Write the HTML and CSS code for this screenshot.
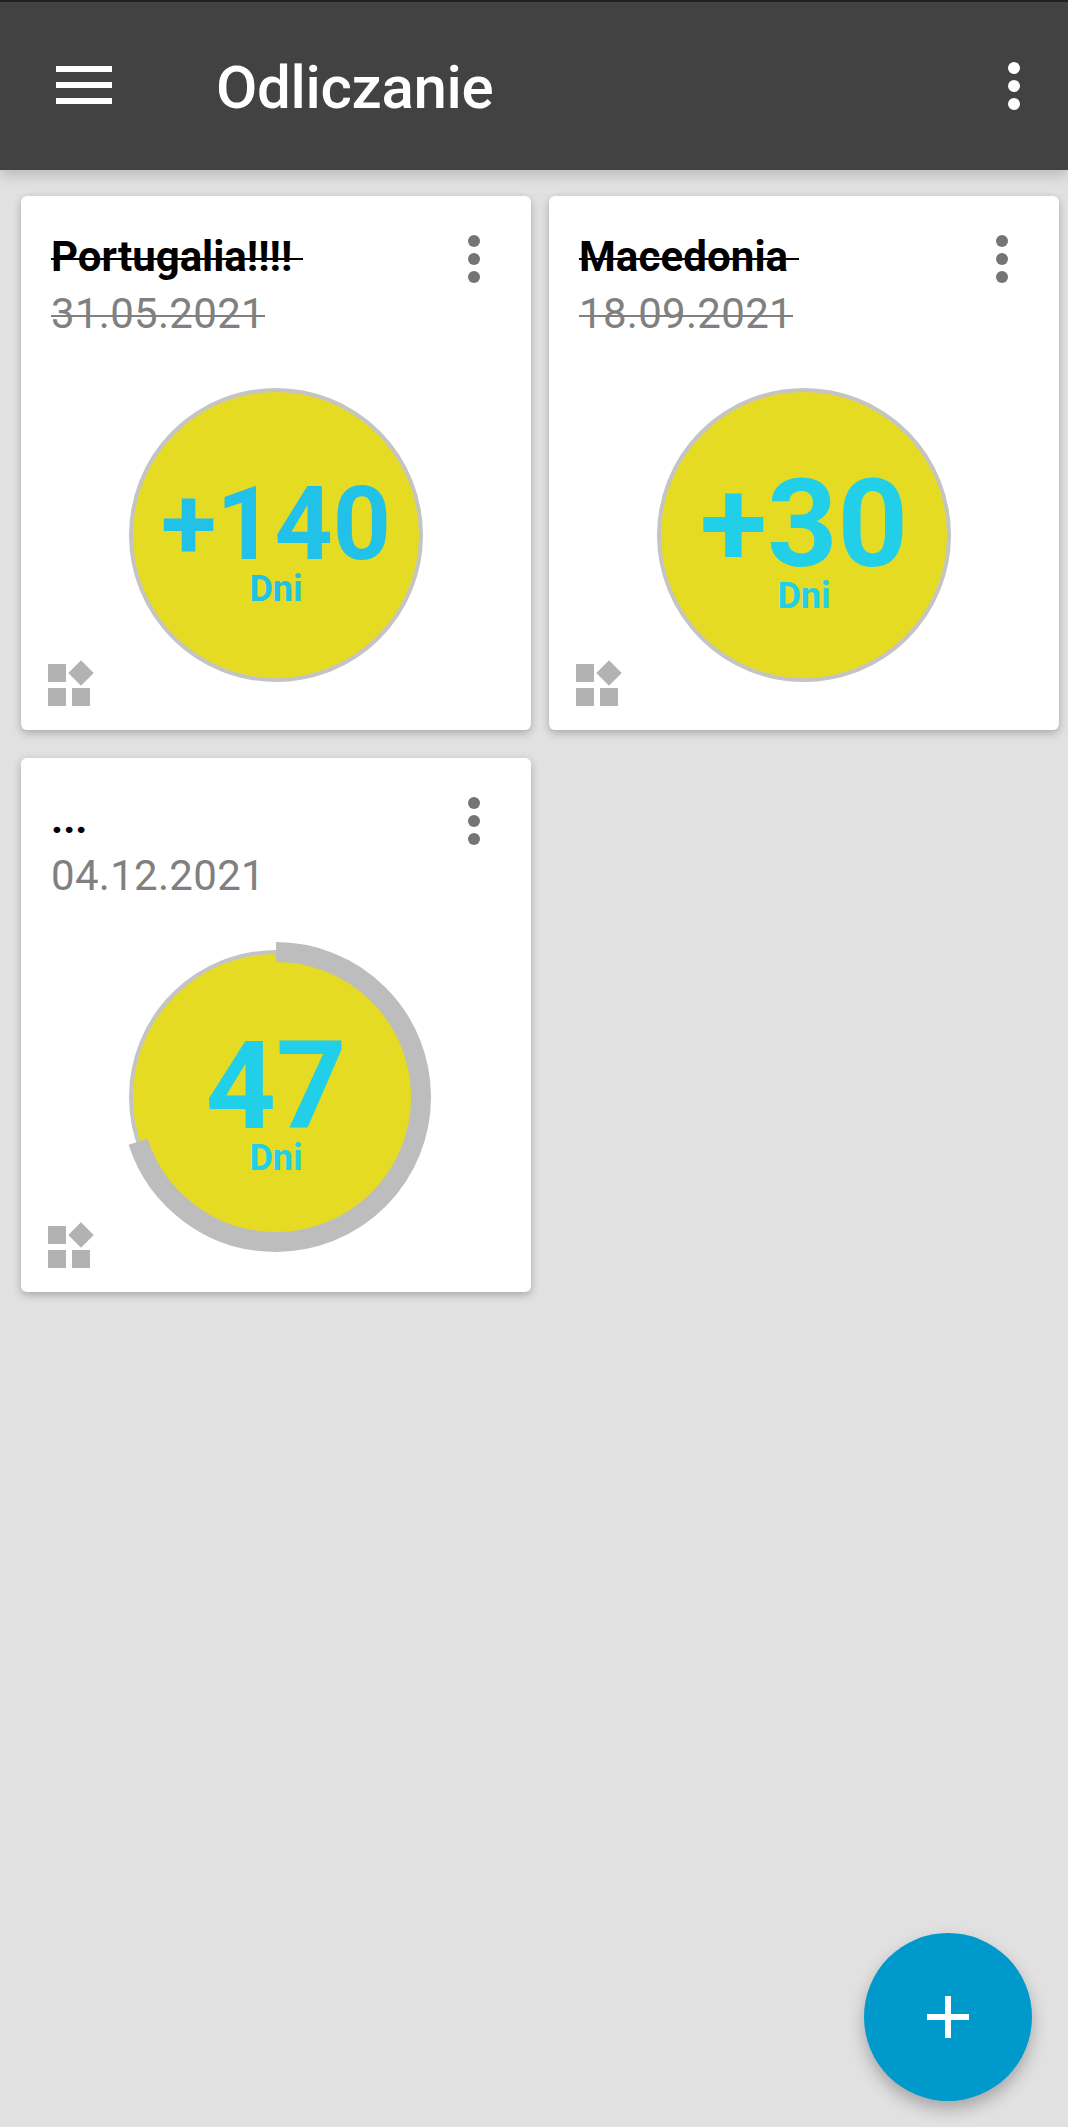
FILE: index.html
```html
<!DOCTYPE html>
<html lang="pl">
<head>
    <meta charset="UTF-8">
    <title>Odliczanie</title>
    <link rel="stylesheet" href="styles.css">
</head>
<body>
    <header class="toolbar">
        <svg class="hamburger" width="56" height="38" viewBox="0 0 56 38">
            <path d="M0 0h56v6H0zM0 16h56v6H0zM0 32h56v6H0z"/>
        </svg>
        <h1 class="toolbar-title">Odliczanie</h1>
        <svg class="dots" width="12" height="48" viewBox="0 0 12 48">
            <circle cx="6" cy="6" r="6"/><circle cx="6" cy="24" r="6"/><circle cx="6" cy="42" r="6"/>
        </svg>
    </header>

    <main class="cards">
        <div class="card past">
            <div class="card-header">
                <div>
                    <div class="name">Portugalia!!!!&nbsp;</div>
                    <div class="date">31.05.2021</div>
                </div>
                <svg class="dots" width="12" height="48" viewBox="0 0 12 48">
                    <circle cx="6" cy="6" r="6"/><circle cx="6" cy="24" r="6"/><circle cx="6" cy="42" r="6"/>
                </svg>
            </div>
            <div class="dial">
                <svg class="ring" width="310" height="310" viewBox="0 0 310 310">
                    <circle class="face" cx="155" cy="155" r="145"/>
                </svg>
                <div class="count small">
                    <div class="number">+140</div>
                    <div class="unit">Dni</div>
                </div>
            </div>
            <svg class="widget" width="46" height="46" viewBox="0 0 46 46">
                <path d="M0 4h18v18H0zM0 28h18v18H0zM24 28h18v18H24zM33 .3L45.7 13 33 25.7 20.3 13z"/>
            </svg>
        </div>

        <div class="card past">
            <div class="card-header">
                <div>
                    <div class="name wide">Macedonia&nbsp;</div>
                    <div class="date">18.09.2021</div>
                </div>
                <svg class="dots" width="12" height="48" viewBox="0 0 12 48">
                    <circle cx="6" cy="6" r="6"/><circle cx="6" cy="24" r="6"/><circle cx="6" cy="42" r="6"/>
                </svg>
            </div>
            <div class="dial">
                <svg class="ring" width="310" height="310" viewBox="0 0 310 310">
                    <circle class="face" cx="155" cy="155" r="145"/>
                </svg>
                <div class="count">
                    <div class="number">+30</div>
                    <div class="unit">Dni</div>
                </div>
            </div>
            <svg class="widget" width="46" height="46" viewBox="0 0 46 46">
                <path d="M0 4h18v18H0zM0 28h18v18H0zM24 28h18v18H24zM33 .3L45.7 13 33 25.7 20.3 13z"/>
            </svg>
        </div>

        <div class="card">
            <div class="card-header">
                <div>
                    <div class="name">...</div>
                    <div class="date">04.12.2021</div>
                </div>
                <svg class="dots" width="12" height="48" viewBox="0 0 12 48">
                    <circle cx="6" cy="6" r="6"/><circle cx="6" cy="24" r="6"/><circle cx="6" cy="42" r="6"/>
                </svg>
            </div>
            <div class="dial">
                <svg class="ring" width="310" height="310" viewBox="0 0 310 310">
                    <circle class="face" cx="155" cy="155" r="145"/>
                    <!-- 70% elapsed -->
                    <circle class="progress" cx="155" cy="155" r="145" pathLength="100" stroke-dasharray="70 100" transform="rotate(-90 155 155)"/>
                </svg>
                <div class="count">
                    <div class="number">47</div>
                    <div class="unit">Dni</div>
                </div>
            </div>
            <svg class="widget" width="46" height="46" viewBox="0 0 46 46">
                <path d="M0 4h18v18H0zM0 28h18v18H0zM24 28h18v18H24zM33 .3L45.7 13 33 25.7 20.3 13z"/>
            </svg>
        </div>
    </main>

    <button class="fab" aria-label="Dodaj">
        <svg width="42" height="42" viewBox="0 0 42 42">
            <path d="M18 0h6v18h18v6H24v18h-6V24H0v-6h18z"/>
        </svg>
    </button>
</body>
</html>
```
FILE: styles.css
```css
* {
    box-sizing: border-box;
}

body {
    margin: 0;
    min-height: 2127px;
    background: #e1e1e1;
    font-family: Roboto, sans-serif;
}

svg {
    display: block;
}

.toolbar {
    display: flex;
    align-items: center;
    height: 170px;
    padding: 0 48px 0 56px;
    border-top: 2px solid #212121;
    background: #424242;
    box-shadow: 0 4px 14px rgba(0, 0, 0, 0.2);
    fill: #fff;
}

.hamburger {
    margin-top: -2px;
}

.toolbar-title {
    margin: 4px auto 0 104px;
    color: #fff;
    font-size: 60px;
    font-weight: 500;
    line-height: 72px;
    letter-spacing: -0.3px;
}

.toolbar .dots {
    margin: 0;
}

.cards {
    display: grid;
    grid-template-columns: 510px 510px;
    gap: 28px 18px;
    padding: 26px 0 0 21px;
}

.card {
    position: relative;
    height: 534px;
    padding: 32px 51px 0 30px;
    background: #fff;
    border-radius: 6px;
    box-shadow: 0 3px 9px rgba(0, 0, 0, 0.25);
}

.card-header {
    display: flex;
    justify-content: space-between;
}

.name, .date {
    width: max-content;
    font-size: 42px;
    line-height: 57px;
}

.name {
    color: #000;
    font-weight: bold;
}

.wide {
    letter-spacing: 0.1px;
}

.date {
    color: #808080;
    letter-spacing: 0.3px;
}

/* line sits a bit lower than text-decoration would put it */
.past .name, .past .date {
    background: linear-gradient(currentColor, currentColor) 0 30px / 100% 2px no-repeat;
}

.dots {
    margin-top: 7px;
}

.card .dots {
    fill: #757575;
}

.dial {
    display: grid;
    width: 310px;
    height: 310px;
    margin: 38px 0 0 70px;
}

.ring, .count {
    grid-area: 1 / 1;
}

.face {
    fill: #e6db23;
    stroke: #c4c4c4;
    stroke-width: 4;
}

.progress {
    fill: none;
    stroke: #bdbdbd;
    stroke-width: 20;
}

.count {
    align-self: center;
    padding-top: 15px;
    color: #22cfe8;
    font-weight: bold;
    text-align: center;
}

.number {
    font-size: 123px;
    line-height: 107px;
}

.unit {
    font-size: 36px;
    line-height: 36px;
}

.small {
    color: #22c1e8;
}

.small .number {
    font-size: 101.5px;
    line-height: 92px;
}

.widget {
    position: absolute;
    left: 27px;
    bottom: 24px;
    fill: #b2b2b2;
}

.fab {
    position: fixed;
    right: 36px;
    bottom: 26px;
    display: flex;
    align-items: center;
    justify-content: center;
    width: 168px;
    height: 168px;
    border: none;
    border-radius: 50%;
    background: #0099cc;
    box-shadow: 0 8px 16px rgba(0, 0, 0, 0.26);
    fill: #fff;
}
```
